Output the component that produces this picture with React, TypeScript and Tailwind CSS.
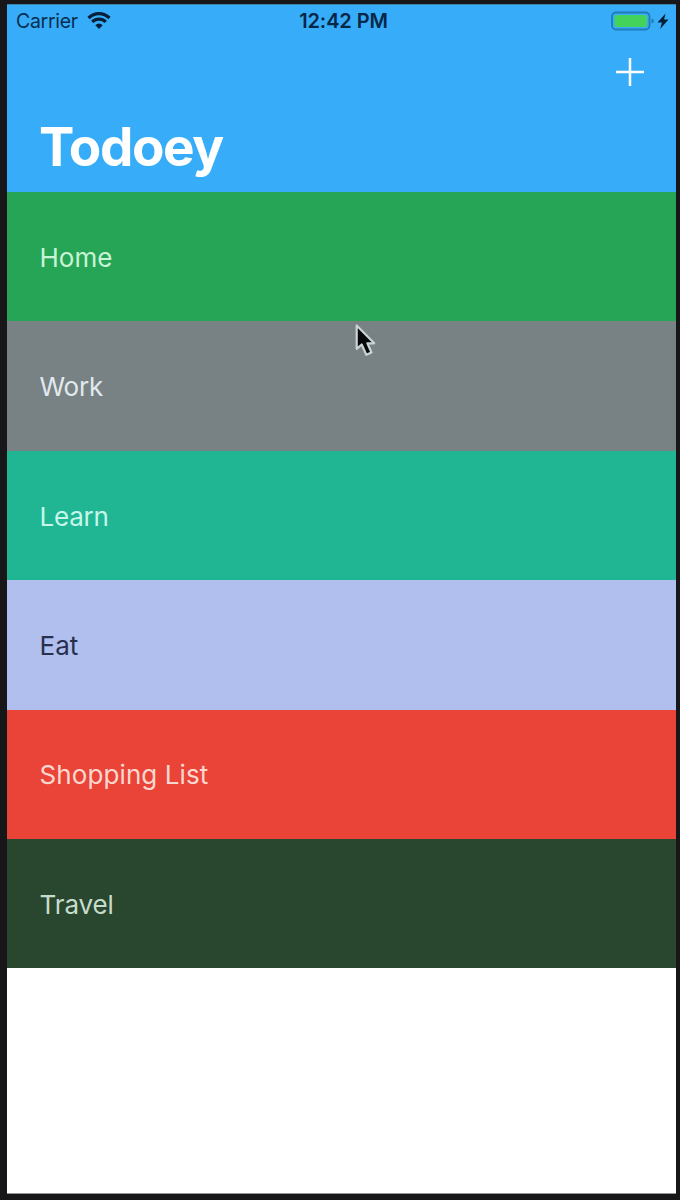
const categories = [
  { name: 'Home', style: 'h-[129px] pt-[2px] bg-[#27a556] text-[#c9f3d5] tracking-[0px]' },
  { name: 'Work', style: 'h-[130px] bg-[#788284] text-[#e2e9ee] tracking-[-0.2px]' },
  { name: 'Learn', style: 'h-[129px] pt-[2px] bg-[#20b694] text-[#c5f6e9] tracking-[-0.2px]' },
  { name: 'Eat', style: 'h-[130px] bg-[#b1bfef] text-[#28304e] tracking-[0px]' },
  { name: 'Shopping List', style: 'h-[129px] bg-[#e94437] text-[#fbd8cf] tracking-[0.1px]' },
  { name: 'Travel', style: 'h-[129px] pt-[2px] bg-[#29462f] text-[#c6dccb] tracking-[-0.1px]' },
];

function WifiIcon() {
  return (
    <svg className="ml-[9px] h-[18px] w-6" viewBox="0 0 24 18" fill="none" stroke="#061f38" strokeWidth="3.2">
      <path d="M1.5 6C7.5.2 16.5.2 22.5 6" />
      <path d="M5.2 9.9C9.2 6.1 14.8 6.1 18.8 9.9" />
      <path d="M12 17 8.3 13.2Q12 9.8 15.7 13.2Z" fill="#061f38" stroke="none" />
    </svg>
  );
}

function Battery() {
  return (
    <svg className="h-5 w-[60px]" viewBox="0 0 60 20">
      <rect x="1" y="1.5" width="37.5" height="17" rx="4" fill="none" stroke="#217bb5" strokeWidth="1.8" />
      <rect x="3.5" y="4" width="32.5" height="12" rx="2" fill="#43d35b" />
      <path d="M40.5 7.5q2.5.5 2.5 2.5t-2.5 2.5Z" fill="#217bb5" />
      <path d="M54.5 2.5 46.5 11.5h4.4L49.2 18l8.3-9.5h-4.4Z" fill="#061f38" />
    </svg>
  );
}

function Cursor() {
  return (
    <svg className="absolute left-[354px] top-[322px] h-9 w-6" viewBox="0 0 24 36">
      <path
        d="M2.7 3.5v23.3l5-4.3 4.6 10.3 5.2-2.3-4.1-9.2h6.8Z"
        fill="#050708"
        stroke="#cbd3d4"
        strokeWidth="2.2"
        strokeLinejoin="round"
      />
    </svg>
  );
}

export default function App() {
  return (
    <div className="relative h-[1200px] w-[680px] bg-[#17171a] pb-[6px] pl-[7px] pr-1 pt-1 font-['Inter',sans-serif]">
      <main className="flex h-full flex-col border-b border-[#929796] bg-white">
        <header className="flex h-[188px] flex-col border-t border-[#3c81ac] bg-[#37adf9]">
          <div className="grid h-8 grid-cols-3 items-center text-[20px] leading-8 text-[#062d50]">
            <div className="flex items-center pl-[9px]">
              <span className="text-[19.5px] tracking-[-0.3px]">Carrier</span>
              <WifiIcon />
            </div>
            <time className="pl-[4px] text-center font-semibold tracking-[-0.1px] text-[#062747]">12:42 PM</time>
            <div className="flex justify-end pr-[5px]">
              <Battery />
            </div>
          </div>
          <button aria-label="Add category" className="mr-[31px] mt-5 self-end">
            <svg className="size-[30px]" viewBox="0 0 30 30" stroke="white" strokeWidth="2.5">
              <path d="M15 1v28M1 15h28" />
            </svg>
          </button>
          <h1 className="mt-[27px] pl-[32px] text-[53px] font-bold leading-[66px] tracking-[-1.4px] text-white">
            Todoey
          </h1>
        </header>
        <ul>
          {categories.map(({ name, style }) => (
            <li key={name} className={`flex items-center pl-[32.5px] text-[26px] ${style}`}>
              {name}
            </li>
          ))}
        </ul>
      </main>
      <Cursor />
    </div>
  );
}
